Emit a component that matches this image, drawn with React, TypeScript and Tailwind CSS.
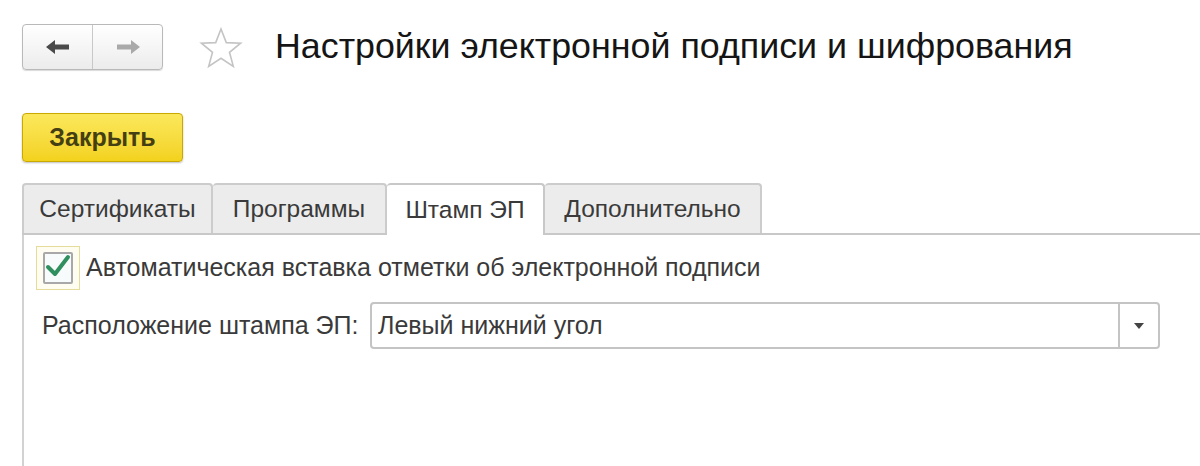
import React from "react";

const font = { fontFamily: '"Liberation Sans", Arial, sans-serif' };

function ArrowLeft({ color }: { color: string }) {
  return (
    <svg width="26" height="16" viewBox="0 0 26 16">
      <path d="M1 8 L10 1 L10 5.5 L24 5.5 L24 10.5 L10 10.5 L10 15 Z" fill={color} />
    </svg>
  );
}

function ArrowRight({ color }: { color: string }) {
  return (
    <svg width="26" height="16" viewBox="0 0 26 16">
      <path d="M25 8 L16 1 L16 5.5 L2 5.5 L2 10.5 L16 10.5 L16 15 Z" fill={color} />
    </svg>
  );
}

export default function App() {
  const tabs = [
    { title: "Сертификаты", w: "w-[191px] border-l-2" },
    { title: "Программы", w: "w-[174px]" },
    { title: "Штамп ЭП", w: "w-[158px]" },
    { title: "Дополнительно", w: "w-[217px]" },
  ];
  const active = 2;

  return (
    <div className="w-[1200px] h-[466px] bg-white overflow-hidden text-[#333]" style={font}>
      {/* Шапка: навигация + заголовок */}
      <div className="flex items-center pl-[22px] pt-[24px] h-[70px]">
        <div className="flex h-[46px] w-[141px] rounded-[4px] border border-[#b9b9b9] bg-gradient-to-b from-white to-[#ececec] shadow-[0_1px_1px_rgba(0,0,0,0.15)]">
          <button type="button" className="flex-1 flex items-center justify-center border-r border-[#c8c8c8]">
            <ArrowLeft color="#4a4a4a" />
          </button>
          <button type="button" className="flex-1 flex items-center justify-center">
            <ArrowRight color="#a9a9a9" />
          </button>
        </div>
        <svg className="ml-[36px] mt-[2px]" width="44" height="42" viewBox="0 0 44 42">
          <path
            d="M22 2 L27.3 15.6 L41.6 16.2 L30.5 25.3 L34.3 39.4 L22 31.3 L9.7 39.4 L13.5 25.3 L2.4 16.2 L16.7 15.6 Z"
            fill="none"
            stroke="#c4c4c4"
            strokeWidth="1.6"
          />
        </svg>
        <h1 className="ml-[32px] text-[35.8px] leading-none text-[#151515]">
          Настройки электронной подписи и шифрования
        </h1>
      </div>

      {/* Кнопка Закрыть */}
      <div className="pl-[22px] pt-[43px]">
        <button
          type="button"
          className="w-[161px] h-[49px] rounded-[4px] border border-[#c9a900] bg-gradient-to-b from-[#fbe85a] to-[#f3d21b] shadow-[0_1px_2px_rgba(0,0,0,0.25)] text-[25px] font-bold text-[#453f14]"
        >
          Закрыть
        </button>
      </div>

      {/* Вкладки */}
      <div className="pl-[22px] pt-[21px]">
        <div className="flex items-end border-b-2 border-[#c8c8c8] h-[52px]">
          {tabs.map((t, i) =>
            i === active ? (
              <div
                key={t.title}
                className={`${t.w} h-[52px] -mb-[2px] flex items-center justify-center bg-white border-t-2 border-r-2 border-[#c8c8c8] rounded-t-[4px] text-[24.5px] text-[#3a3a3a]`}
              >
                {t.title}
              </div>
            ) : (
              <div
                key={t.title}
                className={`${t.w} h-[50px] flex items-center justify-center bg-[#ececec] border-t-2 border-r-2 border-[#cccccc] rounded-t-[4px] text-[24.5px] text-[#3a3a3a]`}
              >
                {t.title}
              </div>
            )
          )}
        </div>

        {/* Содержимое вкладки */}
        <div className="border-l-2 border-[#d2d2d2] h-[240px] pl-[12px] pt-[11px]">
          <label className="flex items-center">
            <span className="w-[44px] h-[44px] border border-[#e6dc9a] bg-[#fffdf2] flex items-center justify-center">
              <span className="w-[30px] h-[32px] border-2 border-[#a8a8a8] rounded-[2px] bg-[#f7fbfb] flex items-center justify-center">
                <svg width="26" height="24" viewBox="0 0 26 24" className="-mt-[4px]">
                  <path d="M3 13 L10 20 L23 3" fill="none" stroke="#2f8f5f" strokeWidth="4" strokeLinecap="round" strokeLinejoin="round" />
                </svg>
              </span>
            </span>
            <span className="ml-[6px] text-[25px] text-[#3a3a3a]">
              Автоматическая вставка отметки об электронной подписи
            </span>
          </label>

          <div className="flex items-center mt-[12px] pl-[6px]">
            <span className="text-[25px] text-[#3a3a3a] w-[328px]">Расположение штампа ЭП:</span>
            <div className="flex w-[790px] h-[47px] border-2 border-[#c4c4c4] rounded-[4px] bg-white">
              <div className="flex-1 flex items-center pl-[6px] text-[25px] text-[#3a3a3a]">Левый нижний угол</div>
              <div className="w-[40px] border-l-2 border-[#c4c4c4] flex items-center justify-center">
                <svg width="10" height="6" viewBox="0 0 10 6">
                  <path d="M0 0 L10 0 L5 6 Z" fill="#444" />
                </svg>
              </div>
            </div>
          </div>
        </div>
      </div>
    </div>
  );
}
